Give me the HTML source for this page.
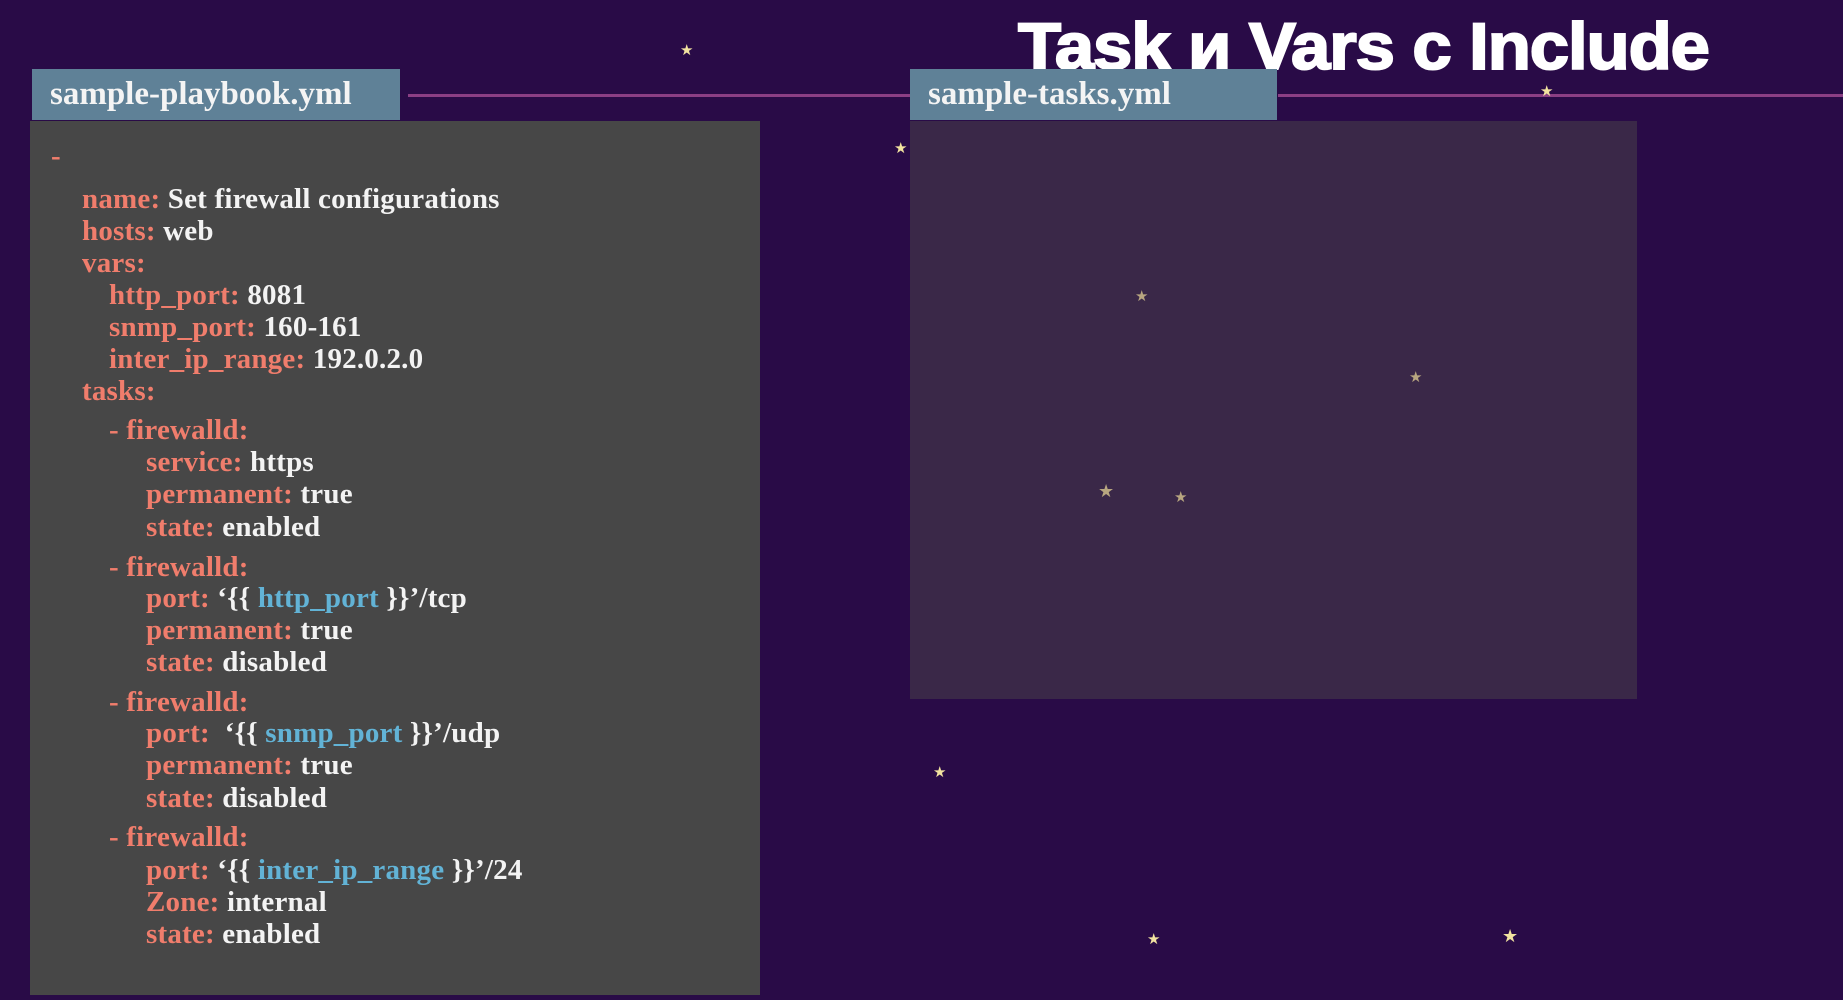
<!DOCTYPE html>
<html><head><meta charset="utf-8"><style>
html,body{margin:0;padding:0}
body{width:1843px;height:1000px;background:#290b47;position:relative;overflow:hidden;font-family:"Liberation Serif",serif}
.abs{position:absolute}
.tab{position:absolute;background:#5f8197;color:#f4f4f4;font-size:33px;font-weight:bold;box-sizing:border-box;padding-left:18px;line-height:51px;height:51px;top:69px;white-space:nowrap}
.ln{position:absolute;left:0;white-space:pre;font-size:29px;font-weight:bold;letter-spacing:0.2px;line-height:32px;color:#f3f3f3}
.k{color:#f07d6c}.v{color:#62b3d6}
.st{position:absolute;color:#f2e3a0;font-size:15px;line-height:15px}
.title{position:absolute;left:1018px;top:8px;color:#fff;font-family:"Liberation Sans",sans-serif;font-weight:bold;font-size:66px;letter-spacing:-1px;transform:scaleX(1.07);transform-origin:left top;white-space:nowrap;-webkit-text-stroke:2px #fff}
</style></head><body>
<div class="abs" style="left:408px;top:94px;width:502px;height:3px;background:#8b3f84"></div>
<div class="abs" style="left:1278px;top:94px;width:565px;height:3px;background:#8b3f84"></div>
<div class="title">Task и Vars c Include</div>
<div class="tab" style="left:32px;width:368px">sample-playbook.yml</div>
<div class="abs" style="left:30px;top:121px;width:730px;height:874px;background:#474747"></div>
<div class="tab" style="left:910px;width:367px">sample-tasks.yml</div>
<div class="abs" style="left:910px;top:121px;width:727px;height:578px;background:#3a2848"></div>

<div class="ln k" style="left:51px;top:140px">-</div>
<div class="ln" style="left:82px;top:183px"><span class="k">name:</span> Set firewall configurations</div>
<div class="ln" style="left:82px;top:215px"><span class="k">hosts:</span> web</div>
<div class="ln k" style="left:82px;top:247px">vars:</div>
<div class="ln" style="left:109px;top:279px"><span class="k">http_port:</span> 8081</div>
<div class="ln" style="left:109px;top:311px"><span class="k">snmp_port:</span> 160-161</div>
<div class="ln" style="left:109px;top:343px"><span class="k">inter_ip_range:</span> 192.0.2.0</div>
<div class="ln k" style="left:82px;top:375px">tasks:</div>

<div class="ln k" style="left:109px;top:414px">- firewalld:</div>
<div class="ln" style="left:146px;top:446px"><span class="k">service:</span> https</div>
<div class="ln" style="left:146px;top:478px"><span class="k">permanent:</span> true</div>
<div class="ln" style="left:146px;top:511px"><span class="k">state:</span> enabled</div>

<div class="ln k" style="left:109px;top:551px">- firewalld:</div>
<div class="ln" style="left:146px;top:582px"><span class="k">port:</span> ‘{{ <span class="v">http_port</span> }}’/tcp</div>
<div class="ln" style="left:146px;top:614px"><span class="k">permanent:</span> true</div>
<div class="ln" style="left:146px;top:646px"><span class="k">state:</span> disabled</div>

<div class="ln k" style="left:109px;top:686px">- firewalld:</div>
<div class="ln" style="left:146px;top:717px"><span class="k">port:</span>  ‘{{ <span class="v">snmp_port</span> }}’/udp</div>
<div class="ln" style="left:146px;top:749px"><span class="k">permanent:</span> true</div>
<div class="ln" style="left:146px;top:782px"><span class="k">state:</span> disabled</div>

<div class="ln k" style="left:109px;top:821px">- firewalld:</div>
<div class="ln" style="left:146px;top:854px"><span class="k">port:</span> ‘{{ <span class="v">inter_ip_range</span> }}’/24</div>
<div class="ln" style="left:146px;top:886px"><span class="k">Zone:</span> internal</div>
<div class="ln" style="left:146px;top:918px"><span class="k">state:</span> enabled</div>

<div class="st" style="left:680px;top:44px">★</div>
<div class="st" style="left:894px;top:142px">★</div>
<div class="st" style="left:1540px;top:85px">★</div>
<div class="st" style="left:1135px;top:290px;color:#b8a680">★</div>
<div class="st" style="left:1409px;top:371px;color:#b8a680">★</div>
<div class="st" style="left:1098px;top:484px;color:#b8a680;font-size:18px">★</div>
<div class="st" style="left:1174px;top:491px;color:#b8a680">★</div>
<div class="st" style="left:933px;top:766px">★</div>
<div class="st" style="left:1147px;top:933px">★</div>
<div class="st" style="left:1502px;top:929px;font-size:18px">★</div>
</body></html>
